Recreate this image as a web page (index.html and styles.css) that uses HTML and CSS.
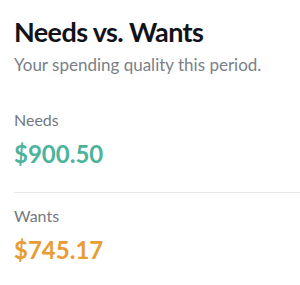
FILE: index.html
```html
<!DOCTYPE html>
<html lang="en">
<head>
    <meta charset="UTF-8">
    <link rel="stylesheet" href="styles.css">
    <title>Needs vs. Wants</title>
</head>
<body>
<div class="card">
    <div class="header">
        <h1 class="title">Needs vs. Wants</h1>
        <p class="subtitle">Your spending quality this period.</p>
    </div>
    <div class="row">
        <div class="label">Needs</div>
        <div class="amount needs">$900.50</div>
    </div>
    <div class="row">
        <div class="label">Wants</div>
        <div class="amount wants">$745.17</div>
    </div>
</div>
</body>
</html>
```

FILE: styles.css
```css
body {
    margin: 0;
    background: #ffffff;
    font-family: "Lato", "Noto Sans", sans-serif;
}
.card {
    padding: 16px 0 0 14px;
}
.title {
    margin: 0;
    font-size: 27px;
    font-weight: 700;
    letter-spacing: -0.6px;
    color: #111318;
    line-height: 32px;
}
.subtitle {
    margin: 7px 0 0;
    font-size: 17px;
    color: #7a7f88;
    line-height: 20px;
}
.header {
    padding-bottom: 27px;
}
.row {
    padding: 8px 0 23px;
}
.row + .row {
    border-top: 1px solid #e6e7ea;
    padding-top: 13px;
}
.label {
    font-size: 16px;
    color: #737882;
    line-height: 20px;
}
.amount {
    margin-top: 9px;
    font-size: 24px;
    font-weight: 700;
    line-height: 30px;
}
.needs { color: #4db39b; }
.wants { color: #e89c33; }
```
